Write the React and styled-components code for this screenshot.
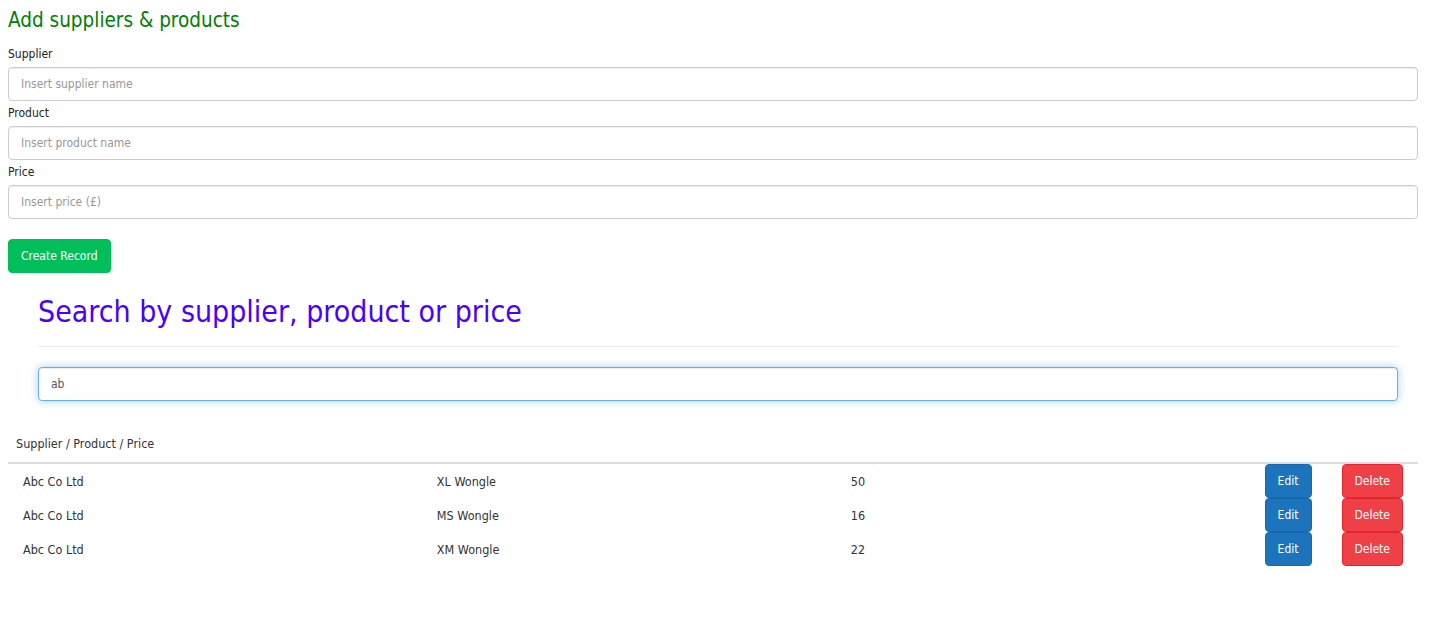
import React from 'react';
import styled, { createGlobalStyle } from 'styled-components';

const GlobalStyle = createGlobalStyle`
  body {
    margin: 8px 11px 8px 8px;
    font-family: 'DejaVu Sans Condensed', 'DejaVu Sans', sans-serif;
    font-stretch: condensed;
    color: #333;
    background: #fff;
  }
  * { box-sizing: border-box; }
`;

const Page = styled.div`
  display: flex;
  flex-direction: column;
`;

const Title = styled.h2`
  margin: 0 0 14px;
  font-size: 20.5px;
  font-weight: normal;
  line-height: 24px;
  color: #008000;
`;

const Label = styled.label`
  display: block;
  font-size: 12px;
  line-height: 16px;
  color: #222;
  margin-bottom: 5px;
`;

const Input = styled.input`
  display: block;
  width: 100%;
  height: 34px;
  padding: 6px 12px;
  font-family: inherit;
  font-stretch: condensed;
  font-size: 12px;
  color: #555;
  border: 1px solid ${(p) => (p.focused ? '#66afe9' : '#ccc')};
  border-radius: 4px;
  outline: none;
  box-shadow: ${(p) =>
    p.focused
      ? 'inset 0 1px 1px rgba(0,0,0,.075), 0 0 8px rgba(102,175,233,.6)'
      : 'inset 0 1px 1px rgba(0,0,0,.075)'};
  margin-bottom: ${(p) => (p.gap === undefined ? 4 : p.gap)}px;
  &::placeholder { color: #999; }
`;

const Button = styled.button`
  display: inline-flex;
  align-items: center;
  justify-content: center;
  height: 34px;
  padding: 0 ${(p) => p.pad || 12}px;
  font-family: inherit;
  font-stretch: condensed;
  font-size: 12px;
  color: #fff;
  background: ${(p) => p.bg};
  border: 1px solid ${(p) => p.border || p.bg};
  border-radius: 4px;
`;

const CreateRow = styled.div`
  display: flex;
`;

const SearchSection = styled.section`
  padding: 0 20px 0 30px;
  margin-top: 19px;
`;

const SearchTitle = styled.h1`
  margin: 0 0 20px;
  font-size: 30px;
  line-height: 40px;
  font-weight: normal;
  color: #4a00ff;
  padding-bottom: 14px;
  border-bottom: 1px solid #eee;
`;

const Table = styled.div`
  display: grid;
  grid-template-columns: 1fr 1fr 1fr auto auto;
  margin-top: 35px;
  font-size: 12.5px;
  color: #333;
`;

const HeadCell = styled.div`
  grid-column: 1 / -1;
  padding: 0 8px 10px;
  line-height: 16px;
  border-bottom: 2px solid #ddd;
`;

const Cell = styled.div`
  display: flex;
  align-items: center;
  padding: 0 15px;
  height: 34px;
`;

const rows = [
  { supplier: 'Abc Co Ltd', product: 'XL Wongle', price: 50 },
  { supplier: 'Abc Co Ltd', product: 'MS Wongle', price: 16 },
  { supplier: 'Abc Co Ltd', product: 'XM Wongle', price: 22 },
];

export default function App() {
  return (
    <Page>
      <GlobalStyle />
      <Title>Add suppliers &amp; products</Title>
      <Label>Supplier</Label>
      <Input placeholder="Insert supplier name" />
      <Label>Product</Label>
      <Input placeholder="Insert product name" />
      <Label>Price</Label>
      <Input placeholder="Insert price (£)" gap={20} />
      <CreateRow>
        <Button bg="#00bf5b">Create Record</Button>
      </CreateRow>
      <SearchSection>
        <SearchTitle>Search by supplier, product or price</SearchTitle>
        <Input focused defaultValue="ab" gap={0} />
      </SearchSection>
      <Table>
        <HeadCell>Supplier / Product / Price</HeadCell>
        {rows.map((r) => (
          <React.Fragment key={r.product}>
            <Cell>{r.supplier}</Cell>
            <Cell>{r.product}</Cell>
            <Cell>{r.price}</Cell>
            <Cell>
              <Button bg="#1c75bc" border="#1a6aab">Edit</Button>
            </Cell>
            <Cell>
              <Button bg="#ef3f47" border="#e3252d">Delete</Button>
            </Cell>
          </React.Fragment>
        ))}
      </Table>
    </Page>
  );
}
